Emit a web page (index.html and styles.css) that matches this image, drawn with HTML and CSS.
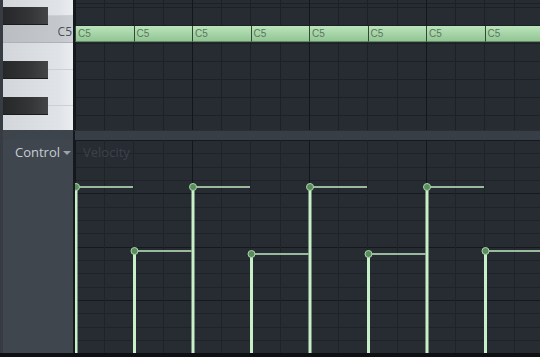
FILE: index.html
```html
<!DOCTYPE html>
<html lang="en">
<head>
    <meta charset="UTF-8">
    <title>Piano Roll</title>
    <link rel="stylesheet" href="styles.css">
</head>
<body>
    <div class="roll">
        <!-- Piano + notes -->
        <div class="row top">
            <div class="side piano">
                <div class="wkey k-d"></div>
                <div class="wkey k-c"><span>C5</span></div>
                <div class="wkey k-b"></div>
                <div class="wkey k-a"></div>
                <div class="wkey k-g"></div>
                <div class="bkey bk-cs"></div>
                <div class="bkey bk-as"></div>
                <div class="bkey bk-gs"></div>
            </div>
            <div class="grid note-grid">
                <div class="notes">
                    <div class="note">C5</div>
                    <div class="note">C5</div>
                    <div class="note">C5</div>
                    <div class="note">C5</div>
                    <div class="note">C5</div>
                    <div class="note">C5</div>
                    <div class="note">C5</div>
                    <div class="note">C5</div>
                </div>
            </div>
        </div>

        <!-- Splitter -->
        <div class="row sep">
            <div class="side"></div>
            <div class="grid sep-grid"></div>
        </div>

        <!-- Event editor -->
        <div class="row bottom">
            <div class="side panel">
                <div class="control">Control <span class="caret"></span></div>
            </div>
            <div class="grid vel-grid">
                <div class="vel-title">Velocity</div>
                <svg class="vel-chart" width="465" height="213" viewBox="0 0 465 213">
                    <g class="levels">
                        <line x1="1" y1="47" x2="58" y2="47"/>
                        <line x1="59.5" y1="111" x2="116.5" y2="111"/>
                        <line x1="118" y1="47" x2="175" y2="47"/>
                        <line x1="176.5" y1="114" x2="233.5" y2="114"/>
                        <line x1="235" y1="47" x2="292" y2="47"/>
                        <line x1="293.5" y1="114" x2="350.5" y2="114"/>
                        <line x1="352" y1="47" x2="409" y2="47"/>
                        <line x1="410.5" y1="111" x2="465" y2="111"/>
                    </g>
                    <g class="stems">
                        <rect x="-0.5" y="47" width="3" height="166"/>
                        <rect x="58" y="111" width="3" height="102"/>
                        <rect x="116.5" y="47" width="3" height="166"/>
                        <rect x="175" y="114" width="3" height="99"/>
                        <rect x="233.5" y="47" width="3" height="166"/>
                        <rect x="292" y="114" width="3" height="99"/>
                        <rect x="350.5" y="47" width="3" height="166"/>
                        <rect x="409" y="111" width="3" height="102"/>
                    </g>
                    <g class="dots">
                        <circle cx="1" cy="47" r="3.5"/>
                        <circle cx="59.5" cy="111" r="3.5"/>
                        <circle cx="118" cy="47" r="3.5"/>
                        <circle cx="176.5" cy="114" r="3.5"/>
                        <circle cx="235" cy="47" r="3.5"/>
                        <circle cx="293.5" cy="114" r="3.5"/>
                        <circle cx="352" cy="47" r="3.5"/>
                        <circle cx="410.5" cy="111" r="3.5"/>
                    </g>
                </svg>
            </div>
        </div>

        <div class="foot"></div>
    </div>
</body>
</html>
```

FILE: styles.css
```css
body {
    margin: 0;
    background-color: #0e1013;
    font-family: "Open Sans", "Liberation Sans", sans-serif;
}
.roll {
    width: 540px;
    height: 357px;
    display: flex;
    flex-direction: column;
    overflow: hidden;
}
.row {
    display: flex;
}
.side {
    width: 70px;
    border-left: 3px solid #363c42;
    flex-shrink: 0;
}
.grid {
    flex: 1;
    border-left: 2px solid #15181c;
    position: relative;
    overflow: hidden;
}

/* Piano keys */
.top {
    height: 130px;
}
.piano {
    position: relative;
    display: flex;
    flex-direction: column;
}
.wkey {
    background: linear-gradient(90deg, #d2d6db, #e0e4e8 80%, #eaedf0);
    border-bottom: 1px solid #ccd0d5;
    box-sizing: border-box;
}
.k-d { height: 16px; }
.k-c {
    height: 27px;
    background: linear-gradient(90deg, #babec3, #c4c8cd 80%, #cccfd3);
    border-bottom-color: #aeb2b7;
    display: flex;
    align-items: center;
    justify-content: flex-end;
    padding: 4px 1px 0 0;
}
.k-c span {
    font-size: 12px;
    color: #4c5157;
}
.k-b { height: 27px; }
.k-a { height: 36px; }
.k-g { flex: 1; border-bottom: none; }
.bkey {
    position: absolute;
    left: 0;
    width: 45px;
    height: 18px;
    background: linear-gradient(90deg, #262729, #343537 60%, #444547);
    border-bottom: 1px solid #1a1b1c;
    box-sizing: border-box;
}
.bk-cs { top: 7px; }
.bk-as { top: 61px; }
.bk-gs { top: 97px; }

/* Note grid */
.note-grid {
    background:
        repeating-linear-gradient(90deg, #14171a 0 1px, transparent 1px 117px),
        repeating-linear-gradient(90deg, #1d2126 0 1px, transparent 1px 29.25px),
        repeating-linear-gradient(180deg, #1d2126 0 1px, transparent 1px 18px) 0 7px,
        #272c33;
}
.notes {
    display: flex;
    margin-top: 26px;
    width: 600px;
}
.note {
    width: 58.5px;
    height: 16px;
    flex-shrink: 0;
    box-sizing: border-box;
    border-left: 1px solid #2f4a32;
    border-bottom: 1px solid #5f8a62;
    background: linear-gradient(180deg, #bde4bd, #a6d5a7 50%, #94c597);
    font-family: "Liberation Sans", sans-serif;
    font-size: 10px;
    line-height: 15px;
    color: #5a785c;
    padding-left: 2px;
}

/* Splitter */
.sep {
    height: 10px;
}
.sep .side {
    background-color: #3d444b;
}
.sep-grid {
    background-color: #383e45;
    border-top: 1px solid #2a2f35;
}

/* Event editor */
.bottom {
    height: 213px;
}
.panel {
    background-color: #3f464d;
}
.control {
    padding: 3px 0 0 12px;
    font-size: 13px;
    color: #c6cdd4;
    display: flex;
    align-items: center;
    gap: 3px;
}
.caret {
    width: 0;
    height: 0;
    border-left: 4px solid transparent;
    border-right: 4px solid transparent;
    border-top: 4px solid #9aa2aa;
    margin-top: 2px;
}
.vel-grid {
    background:
        repeating-linear-gradient(90deg, #14171a 0 1px, transparent 1px 117px),
        repeating-linear-gradient(90deg, #1f2328 0 1px, transparent 1px 29.25px),
        repeating-linear-gradient(180deg, #15181c 0 1px, transparent 1px 53.333px) 0 0,
        repeating-linear-gradient(180deg, #1f2328 0 1px, transparent 1px 13.333px) 0 0,
        #272c33;
}
.vel-title {
    padding: 3px 0 0 8px;
    font-size: 13px;
    color: #3c424a;
}
.vel-chart {
    position: absolute;
    left: 0;
    top: 0;
}
.levels line {
    stroke: #c2eac2;
    stroke-width: 1.5;
}
.stems rect {
    fill: #c8f0c8;
}
.dots circle {
    fill: #5b8c5e;
    stroke: #a9d6aa;
    stroke-width: 1;
}

.foot {
    height: 4px;
    background-color: #0e1013;
}
```
